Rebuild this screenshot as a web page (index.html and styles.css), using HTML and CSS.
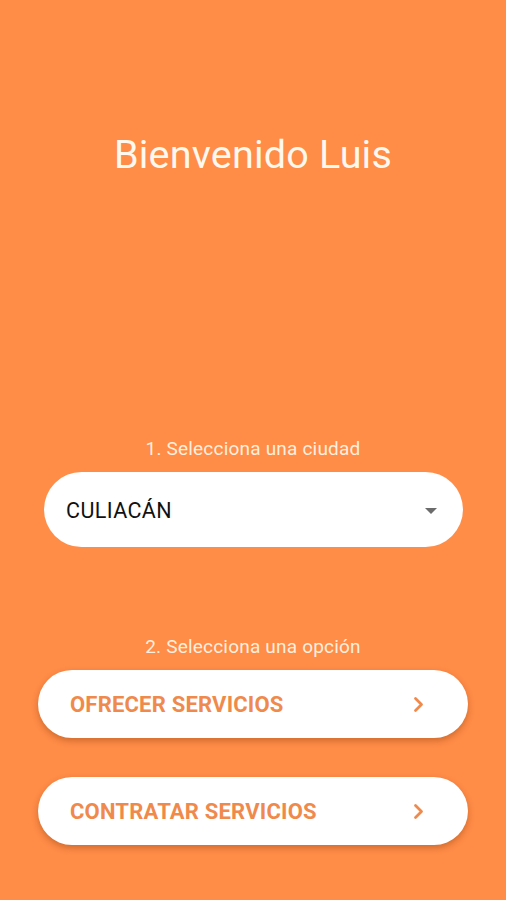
FILE: index.html
```html
<!DOCTYPE html>
<html lang="es">

<head>
  <meta charset="UTF-8">
  <meta name="viewport" content="width=device-width, initial-scale=1.0">
  <title>Bienvenido</title>
  <link rel="stylesheet" href="styles.css">
</head>

<body>

  <div class="screen">

    <h1 class="welcome">Bienvenido Luis</h1>

    <!-- Ciudad -->
    <p class="step step-city">1. Selecciona una ciudad</p>
    <div class="city-select">
      <span class="city-name">CULIACÁN</span>
      <svg class="caret" width="12" height="6" viewBox="0 0 12 6"><path d="M0 0h12L6 6z" fill="#6b6b6b"/></svg>
    </div>

    <!-- Opciones -->
    <p class="step step-option">2. Selecciona una opción</p>
    <div class="option">
      <span>OFRECER SERVICIOS</span>
      <svg class="chevron" width="11" height="17" viewBox="0 0 11 17"><path d="M2.5 2.5l6 6-6 6" fill="none" stroke="#f08a4c" stroke-width="2.8" stroke-linecap="round" stroke-linejoin="round"/></svg>
    </div>
    <div class="option">
      <span>CONTRATAR SERVICIOS</span>
      <svg class="chevron" width="11" height="17" viewBox="0 0 11 17"><path d="M2.5 2.5l6 6-6 6" fill="none" stroke="#f08a4c" stroke-width="2.8" stroke-linecap="round" stroke-linejoin="round"/></svg>
    </div>

  </div>

</body>

</html>
```

FILE: styles.css
```css
body {
  margin: 0;
  background: #ff8c47;
  font-family: Roboto, "Liberation Sans", sans-serif;
}

.screen {
  display: flex;
  flex-direction: column;
  padding-top: 133px;
  height: 900px;
  box-sizing: border-box;
}

.welcome {
  margin: 0;
  font-size: 39.5px;
  line-height: 44px;
  font-weight: 400;
  text-align: center;
  color: #fff8ee;
  letter-spacing: 0.2px;
}

.step {
  margin: 0;
  font-size: 19px;
  line-height: 20px;
  text-align: center;
  color: #ffefdf;
  letter-spacing: 0.2px;
}

.step-city {
  margin-top: 262px;
}

.step-option {
  margin-top: 90px;
}

.city-select {
  display: flex;
  align-items: center;
  justify-content: space-between;
  margin: 13px 43px 0 44px;
  height: 75px;
  padding: 2px 26px 0 22px;
  box-sizing: border-box;
  background: #fff;
  border-radius: 38px;
}

.city-name {
  font-size: 21.5px;
  color: #111;
  letter-spacing: 0.4px;
}

.option {
  display: flex;
  align-items: center;
  justify-content: space-between;
  margin: 13px 38px 0 38px;
  height: 68px;
  padding: 1px 44px 0 32px;
  box-sizing: border-box;
  background: #fff;
  border-radius: 34px;
  box-shadow: 0 3px 6px rgba(120, 50, 0, 0.35);
  font-size: 22px;
  font-weight: 700;
  color: #f08a4c;
  letter-spacing: 0.2px;
}

.option + .option {
  margin-top: 39px;
}
```
